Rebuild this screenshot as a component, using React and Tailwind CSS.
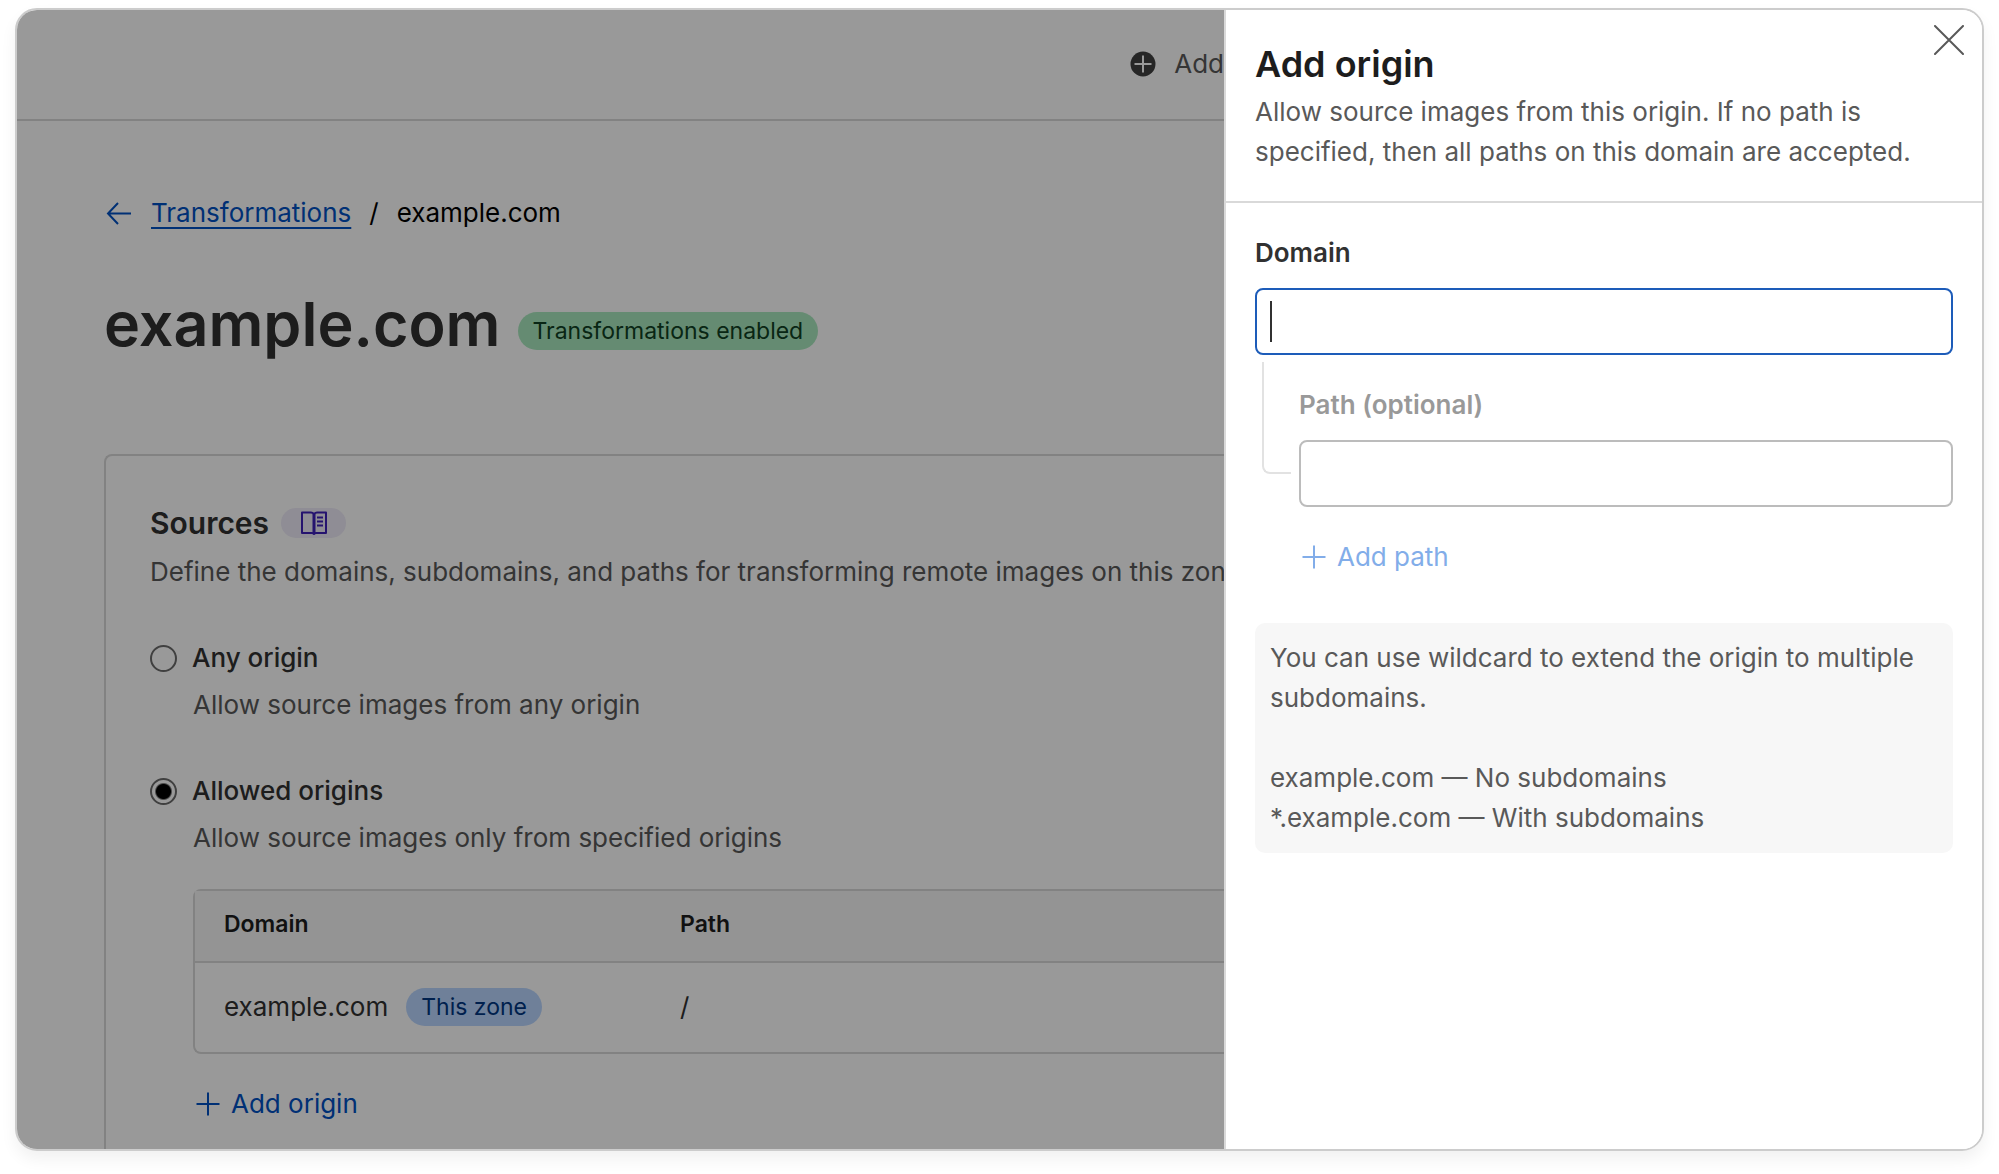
import React from "react";

function Plus() {
  return (
    <svg viewBox="0 0 24 24" className="size-6 shrink-0" fill="none" stroke="currentColor" strokeWidth="2" aria-hidden="true">
      <path d="M12 0.5v23M0.5 12h23" />
    </svg>
  );
}

function BookIcon() {
  return (
    <svg viewBox="0 0 26 24" className="h-6 w-[26px]" fill="none" stroke="currentColor" strokeWidth="2" strokeLinejoin="round" aria-hidden="true">
      <path d="M13 3C12 2 11 1.500 10 1.500H1v20.500h10c1 0 1.500.4 2 1 .5-.6 1-1 2-1h10V1.500h-9c-1 0-2 .5-3 1.500z" />
      <path d="M13 3v20" strokeWidth="3" />
      <path d="M16 6.500h6M16 10.500h6M16 14.500h6" />
    </svg>
  );
}

function Option({ id, title, text, checked }) {
  return (
    <div>
      <div className="flex items-center gap-[15px]">
        <input
          type="radio"
          name="origins"
          id={id}
          defaultChecked={checked}
          className="size-[27px] shrink-0 appearance-none rounded-full border-2 border-[#6b6b6b] checked:bg-[radial-gradient(circle,#000_7px,transparent_9px)]"
        />
        <label htmlFor={id} className="font-medium text-[#313131]">{title}</label>
      </div>
      <p className="mt-[7px] pl-[43px] text-[#595959]">{text}</p>
    </div>
  );
}

function Page() {
  return (
    <div className="relative flex min-w-0 flex-1 flex-col overflow-hidden whitespace-nowrap bg-white">
      <header className="flex h-[111px] shrink-0 items-center justify-end border-b-2 border-[#d9d9d9] pb-0.5">
        <button type="button" className="flex items-center gap-[18px] text-[#595959]">
          <svg viewBox="0 0 26 26" className="size-[26px]" aria-hidden="true">
            <circle cx="13" cy="13" r="12.500" fill="#404040" />
            <path d="M13 4.500v17M4.500 13h17" stroke="#fff" strokeWidth="2" />
          </svg>
          Add
        </button>
      </header>
      <main className="flex flex-1 flex-col pl-[87px] pt-[72px]">
        <nav className="flex items-center" aria-label="Breadcrumb">
          <svg viewBox="0 0 26 24" className="ml-0.5 mr-[19px] h-6 w-[26px] text-[#0051c3]" fill="none" stroke="currentColor" strokeWidth="2" aria-hidden="true">
            <path d="M25 12.500H2M12 2L2 12.500 12 23" />
          </svg>
          <a href="#transformations" className="text-[#0051c3] underline decoration-2 underline-offset-[5px]">Transformations</a>
          <span className="mx-[18px]">/</span>
          <span>example.com</span>
        </nav>
        <div className="mt-[55px] flex items-end gap-[17px]">
          <h1 className="text-[61px] font-semibold leading-[72px] text-[#313131]">example.com</h1>
          <span className="mb-[10px] rounded-full bg-[#a9e8be] px-[15px] text-[23px] leading-[38px] text-[#0f4023]">Transformations enabled</span>
        </div>
        <section className="mt-[94px] flex-1 rounded-tl-lg border-l-2 border-t-2 border-[#d9d9d9] pl-11 pt-[47px]">
          <div className="flex items-center gap-3">
            <h2 className="text-[30px] font-semibold text-[#313131]">Sources</h2>
            <a href="#docs" aria-label="Sources documentation" className="flex h-[30px] w-[65px] items-center justify-center rounded-full bg-[#eeebf8] text-[#3f20ba]">
              <BookIcon />
            </a>
          </div>
          <p className="mt-[9px] text-[#595959]">Define the domains, subdomains, and paths for transforming remote images on this zone.</p>
          <fieldset className="mt-[46px] flex flex-col gap-[46px]">
            <Option id="any" title="Any origin" text="Allow source images from any origin" />
            <Option id="allowed" title="Allowed origins" text="Allow source images only from specified origins" checked />
          </fieldset>
          <div className="ml-[43px]">
            <div className="mt-[31px] rounded-l-lg border-y-2 border-l-2 border-[#d9d9d9]">
              <table className="w-full table-fixed text-left">
                <thead>
                  <tr className="h-[71px] border-b-2 border-[#d9d9d9] bg-[#f7f7f7] text-[23px] text-[#1d1d1d]">
                    <th scope="col" className="w-[485px] pb-1 pl-[29px] font-semibold">Domain</th>
                    <th scope="col" className="pb-1 font-semibold">Path</th>
                  </tr>
                </thead>
                <tbody>
                  <tr className="h-[90px] text-[#313131]">
                    <td className="pb-0.5 pl-[29px]">
                      <div className="flex items-center gap-[18px]">
                        example.com
                        <span className="rounded-full bg-[#b9d6ff] px-[15px] text-[23px] leading-[38px] text-[#003682]">This zone</span>
                      </div>
                    </td>
                    <td className="pb-0.5">/</td>
                  </tr>
                </tbody>
              </table>
            </div>
            <button type="button" className="ml-[3px] mt-[30px] flex items-center gap-[11px] text-[#0051c3]">
              <Plus />
              Add origin
            </button>
          </div>
        </section>
      </main>
      <div className="absolute inset-0 bg-black/40" aria-hidden="true" />
    </div>
  );
}

function Drawer() {
  return (
    <aside role="dialog" aria-labelledby="drawer-title" className="relative w-[758px] shrink-0 border-l-2 border-[#d9d9d9] bg-white">
      <button type="button" aria-label="Close" className="absolute right-[18px] top-[15px] text-[#595959]">
        <svg viewBox="0 0 30 30" className="size-[30px]" fill="none" stroke="currentColor" strokeWidth="2" strokeLinecap="round" aria-hidden="true">
          <path d="M1 1l28 28M29 1L1 29" />
        </svg>
      </button>
      <header className="border-b-2 border-[#d9d9d9] px-[29px] pb-[29px] pt-8">
        <h2 id="drawer-title" className="text-[36px] font-semibold leading-[44px] text-[#1d1d1d]">Add origin</h2>
        <p className="mt-[6px] text-[#595959]">Allow source images from this origin. If no path is specified, then all paths on this domain are accepted.</p>
      </header>
      <form className="px-[29px] pt-[30px]">
        <label htmlFor="domain" className="block font-semibold text-[#313131]">Domain</label>
        <div className="relative mt-[15px]">
          <input id="domain" type="text" className="block h-[67px] w-full rounded-lg border-2 border-[#1d5cb9] px-[14px] outline-none" />
          <span className="absolute left-[15px] top-[13px] h-[41px] w-[2px] bg-[#313131]" aria-hidden="true" />
        </div>
        <div className="flex">
          <div className="ml-[7px] mr-2 mt-[7px] h-[112px] w-[29px] rounded-bl-lg border-b-2 border-l-2 border-[#e2e2e2]" aria-hidden="true" />
          <div className="flex-1 pt-[30px]">
            <label htmlFor="path" className="block font-semibold text-[#999999]">Path (optional)</label>
            <input id="path" type="text" className="mt-[15px] block h-[67px] w-full rounded-lg border-2 border-[#bcbcbc] px-[14px] outline-none" />
            <button type="button" className="ml-[3px] mt-[30px] flex items-center gap-[11px] text-[#82ade9]">
              <Plus />
              Add path
            </button>
          </div>
        </div>
        <div className="mt-[46px] rounded-[10px] bg-[#f7f7f7] px-[15px] py-[15px] text-[#595959]">
          <p>You can use wildcard to extend the origin to multiple subdomains.</p>
          <p className="mt-10">example.com — No subdomains</p>
          <p>*.example.com — With subdomains</p>
        </div>
      </form>
    </aside>
  );
}

export default function App() {
  return (
    <div className="flex h-screen bg-white px-[15px] pb-[23px] pt-2 font-['Inter',sans-serif] text-[26px] leading-[40px] text-black">
      <div className="flex min-w-0 flex-1 overflow-hidden rounded-[22px] border-2 border-[#cccccc] shadow-[0_8px_16px_rgba(0,0,0,0.06)]">
        <Page />
        <Drawer />
      </div>
    </div>
  );
}
